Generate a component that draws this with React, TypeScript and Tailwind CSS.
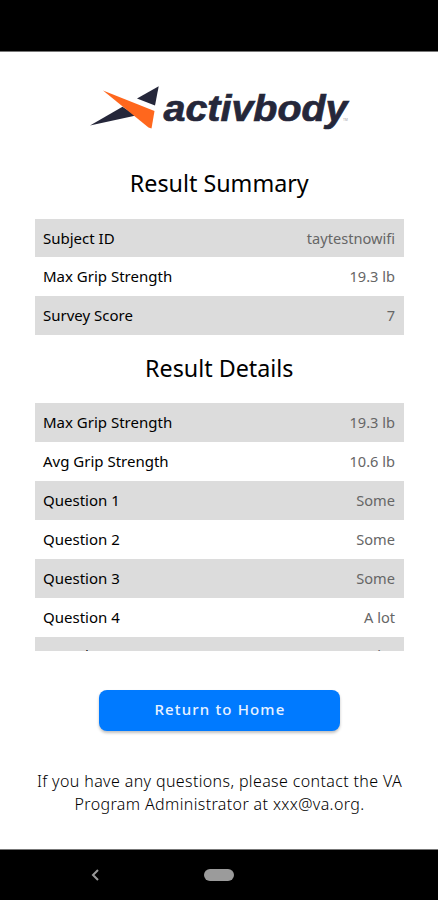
type Row = {
  label: string;
  value: string;
};

const summary: Row[] = [
  { label: 'Subject ID', value: 'taytestnowifi' },
  { label: 'Max Grip Strength', value: '19.3 lb' },
  { label: 'Survey Score', value: '7' },
];

const details: Row[] = [
  { label: 'Max Grip Strength', value: '19.3 lb' },
  { label: 'Avg Grip Strength', value: '10.6 lb' },
  { label: 'Question 1', value: 'Some' },
  { label: 'Question 2', value: 'Some' },
  { label: 'Question 3', value: 'Some' },
  { label: 'Question 4', value: 'A lot' },
  { label: 'Question 5', value: 'A lot' },
];

function Logo() {
  return (
    <svg className="mx-auto block" width="280" height="65" viewBox="0 0 280 65" aria-label="activbody">
      <path d="M11 50.5 43.5 31.8 57 40.5Z" fill="#25273a" />
      <path d="M58 23.5 79.7 11.3 76 30.5Z" fill="#25273a" />
      <path d="M24 15.5 75.5 36 72.5 53.5 69.5 52.5Z" fill="#ff671d" />
      <text
        x="84.5"
        y="45.5"
        textLength="184"
        lengthAdjust="spacingAndGlyphs"
        className="font-['Liberation_Sans',sans-serif] text-[36.5px] font-bold italic"
        fill="#25273a"
        stroke="#25273a"
        strokeWidth="0.7"
      >
        activbody
      </text>
      <text x="264" y="46" className="font-['Inter',sans-serif] text-[3px]" fill="#999">
        TM
      </text>
    </svg>
  );
}

function ResultTable({ rows }: { rows: Row[] }) {
  return (
    <div>
      {rows.map(({ label, value }) => (
        <div
          key={label}
          className="flex h-[38.9px] items-baseline justify-between px-[9px] pt-[8px] text-[15px] leading-[22px] odd:bg-[#dcdcdc] nth-[7]:pt-[7.4px]"
        >
          <span className="-ml-[0.5px] text-black">{label}</span>
          <span className="text-[14.6px] text-[#666]">{value}</span>
        </div>
      ))}
    </div>
  );
}

export default function App() {
  return (
    <div className="flex h-[900px] w-[438px] flex-col overflow-hidden bg-white font-['Noto_Sans',sans-serif] text-black">
      <div className="h-[52px] shrink-0 border-b border-[#777] bg-black" />

      <main className="flex flex-1 flex-col pt-[23px]">
        <Logo />

        <section className="mr-[34px] ml-[34.5px] pt-[25px]">
          <h1 className="h-[53.5px] text-center text-[23.3px] leading-[36px]">Result Summary</h1>
          <ResultTable rows={summary} />
        </section>

        <section className="mr-[34px] ml-[34.5px] pt-[14.5px]">
          <h2 className="h-[53.5px] text-center text-[23.3px] leading-[36px]">Result Details</h2>
          <div className="h-[247.5px] overflow-hidden">
            <ResultTable rows={details} />
          </div>
        </section>

        <button className="mx-auto mt-[39px] h-[41px] w-[241px] rounded-lg bg-[#007aff] pb-px pl-[2px] text-[15px] font-medium tracking-[1.15px] text-[#e8f2ff] shadow-[0_2px_3px_rgba(0,0,0,0.25)]">
          Return to Home
        </button>

        <p className="mt-[39.5px] pl-px text-center text-[16px] leading-[22.5px] font-light tracking-[0.37px]">
          If you have any questions, please contact the VA
          <br />
          Program Administrator at xxx@va.org.
        </p>
      </main>

      <nav className="flex h-[51px] shrink-0 items-center border-t border-[#777] bg-black pl-[91px]">
        <svg width="8" height="12" viewBox="0 0 8 12" fill="none" stroke="#999" strokeWidth="2">
          <path d="M7 1 2 6l5 5" />
        </svg>
        <div className="ml-[105px] h-3 w-[30px] rounded-full bg-[#9b9b9b]" />
      </nav>
    </div>
  );
}
